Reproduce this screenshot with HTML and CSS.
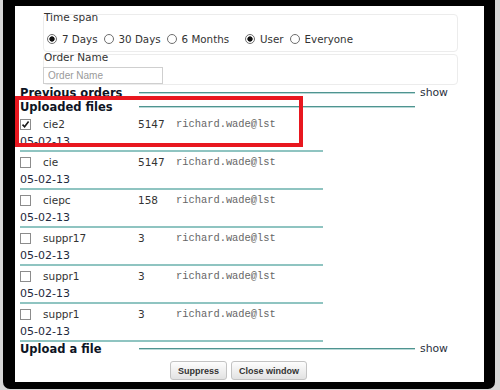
FILE: index.html
```html
<!DOCTYPE html>
<html>
<head>
<meta charset="utf-8">
<link rel="stylesheet" href="styles.css">
</head>
<body>
<div class="page">
  <div class="frame">
    <div class="dialog">
      <div class="filters">
        <div class="box box-time">
          <div class="label">Time span</div>
          <div class="radios">
            <label class="opt"><input type="radio" name="span" checked>7 Days</label>
            <label class="opt"><input type="radio" name="span">30 Days</label>
            <label class="opt"><input type="radio" name="span">6 Months</label>
            <span class="spacer"></span>
            <label class="opt"><input type="radio" name="who" checked>User</label>
            <label class="opt"><input type="radio" name="who">Everyone</label>
          </div>
        </div>
        <div class="box box-name">
          <div class="label">Order Name</div>
          <input class="name-input" type="text" placeholder="Order Name">
        </div>
      </div>

      <div class="section section-first">
        <h3 class="section-title">Previous orders</h3>
        <span class="rule"></span>
        <span class="show">show</span>
      </div>
      <div class="section">
        <h3 class="section-title">Uploaded files</h3>
        <span class="rule"></span>
      </div>

      <ul class="files">
        <li class="file">
          <div class="file-main"><span class="cb checked"><svg viewBox="0 0 9 9" width="9" height="9"><path d="M1.5 4.6 L3.6 6.8 L7.6 1.6" fill="none" stroke="#1a1a1a" stroke-width="1.6"/></svg></span><span class="fname">cie2</span><span class="fsize">5147</span><span class="fuser">richard.wade@lst</span></div>
          <div class="fdate">05-02-13</div>
        </li>
        <li class="file">
          <div class="file-main"><span class="cb"></span><span class="fname">cie</span><span class="fsize">5147</span><span class="fuser">richard.wade@lst</span></div>
          <div class="fdate">05-02-13</div>
        </li>
        <li class="file">
          <div class="file-main"><span class="cb"></span><span class="fname">ciepc</span><span class="fsize">158</span><span class="fuser">richard.wade@lst</span></div>
          <div class="fdate">05-02-13</div>
        </li>
        <li class="file">
          <div class="file-main"><span class="cb"></span><span class="fname">suppr17</span><span class="fsize">3</span><span class="fuser">richard.wade@lst</span></div>
          <div class="fdate">05-02-13</div>
        </li>
        <li class="file">
          <div class="file-main"><span class="cb"></span><span class="fname">suppr1</span><span class="fsize">3</span><span class="fuser">richard.wade@lst</span></div>
          <div class="fdate">05-02-13</div>
        </li>
        <li class="file">
          <div class="file-main"><span class="cb"></span><span class="fname">suppr1</span><span class="fsize">3</span><span class="fuser">richard.wade@lst</span></div>
          <div class="fdate">05-02-13</div>
        </li>
      </ul>

      <div class="section">
        <h3 class="section-title">Upload a file</h3>
        <span class="rule"></span>
        <span class="show">show</span>
      </div>

      <div class="actions">
        <button class="btn" type="button">Suppress</button>
        <button class="btn" type="button">Close window</button>
      </div>
    </div>
  </div>
  <div class="highlight"></div>
</div>
</body>
</html>
```

FILE: styles.css
```css
html, body {
  margin: 0;
  padding: 0;
}
body {
  font-family: "DejaVu Sans", Verdana, sans-serif;
  background: #d6d6d6;
}
.page {
  position: relative;
  width: 500px;
  height: 390px;
  overflow: hidden;
  background: #d6d6d6;
}
.frame {
  box-sizing: border-box;
  margin-left: 3px;
  width: 492px;
  height: 389px;
  padding: 6px 11px 7px 12px;
  background: #000;
  border-radius: 0 0 7px 7px;
}
.dialog {
  box-sizing: border-box;
  height: 376px;
  background: #fff;
  padding: 8px 5px 0 5px;
}
.filters {
  margin-left: 23px;
  width: 415px;
}
.box {
  box-sizing: border-box;
  border: 1px solid #ececec;
  border-radius: 4px;
}
.box-time {
  height: 38px;
}
.box-name {
  height: 31px;
  margin-top: 2px;
}
.label {
  margin-top: -5px;
  font-size: 10.5px;
  line-height: 14px;
  color: #333;
}
.radios {
  display: flex;
  align-items: center;
  height: 18px;
  margin-top: 6px;
  padding-left: 3px;
  font-size: 10.3px;
  color: #333;
}
.opt {
  display: flex;
  align-items: center;
  margin-right: 6px;
}
.opt input {
  -webkit-appearance: none;
  appearance: none;
  box-sizing: border-box;
  width: 10px;
  height: 10px;
  margin: 0 5px 0 0;
  border: 1px solid #6e6e6e;
  border-radius: 50%;
  background: #fff;
}
.opt input:checked {
  background: radial-gradient(circle, #111 0, #111 2.3px, #fff 3px);
}
.spacer {
  width: 10px;
}
.name-input {
  display: block;
  box-sizing: border-box;
  width: 120px;
  height: 17px;
  margin: 3px 0 0 -1px;
  padding: 0 0 0 4px;
  border: 1px solid #cfcfcf;
  font-family: "Liberation Sans", Arial, sans-serif;
  font-size: 10px;
  color: #333;
  outline: none;
}
.name-input::placeholder {
  color: #9a9a9a;
}
.section {
  display: flex;
  align-items: center;
  height: 14px;
}
.section-first {
  margin-top: 1px;
}
.section-title {
  margin: 0;
  width: 119px;
  font-size: 11.5px;
  font-weight: bold;
  line-height: 14px;
  color: #0e1424;
  white-space: nowrap;
}
.rule {
  width: 276px;
  height: 2px;
  background: linear-gradient(#4f9490 0, #4f9490 1px, #b9d9d7 1px);
}
.show {
  margin-left: 5px;
  font-size: 10.8px;
  line-height: 14px;
  color: #2a303d;
}
.files {
  list-style: none;
  margin: 0;
  padding: 0;
}
.file {
  box-sizing: border-box;
  width: 303px;
  height: 38px;
  border-bottom: 2px solid #8fc4c1;
}
.file-main {
  display: flex;
  align-items: center;
  height: 20px;
}
.cb {
  box-sizing: border-box;
  display: flex;
  align-items: center;
  justify-content: center;
  width: 11px;
  height: 11px;
  margin-right: 12px;
  border: 1px solid #8c8c8c;
  background: #fff;
}
.fname {
  width: 95px;
  font-size: 10.5px;
  color: #333;
}
.fsize {
  width: 38px;
  font-size: 10.5px;
  color: #333;
}
.fuser {
  font-family: "Liberation Mono", "Courier New", monospace;
  font-size: 10.4px;
  color: #666;
}
.fdate {
  height: 16px;
  line-height: 16px;
  font-size: 11px;
  color: #1f2940;
}
.actions {
  display: flex;
  gap: 4px;
  margin-top: 5px;
  padding-left: 150px;
}
.btn {
  height: 19px;
  padding: 0 7px;
  border: 1px solid #c3c3c3;
  border-radius: 3px;
  background: linear-gradient(#fdfdfd, #e2e2e2);
  font-family: "Liberation Sans", Arial, sans-serif;
  font-size: 9px;
  font-weight: bold;
  color: #333;
}
.highlight {
  position: absolute;
  left: 15px;
  top: 96px;
  width: 288px;
  height: 51px;
  box-sizing: border-box;
  border: 4px solid #e8171f;
}
```
